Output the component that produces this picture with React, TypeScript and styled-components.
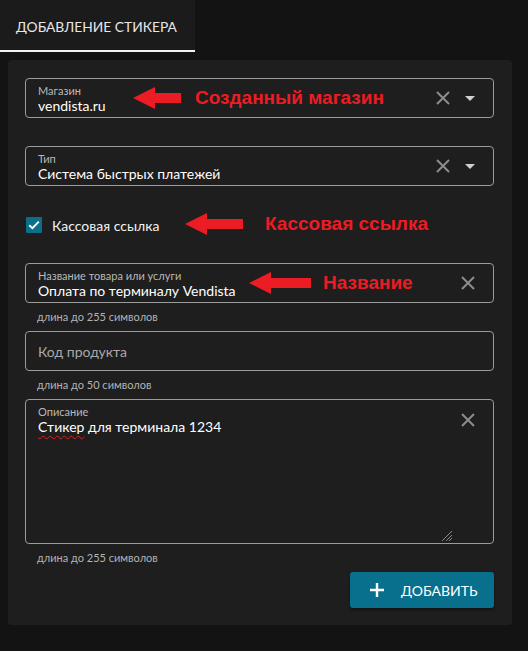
import styled, { createGlobalStyle } from 'styled-components';

const GlobalStyle = createGlobalStyle`
  html, body {
    margin: 0;
    padding: 0;
    background: #131313;
    font-family: Lato, 'Noto Sans', sans-serif;
  }
`;

export default function App() {
  return (
    <Page>
      <GlobalStyle />
      <TabBar>
        <Tab>Добавление стикера</Tab>
      </TabBar>
      <Panel>
        <Field $mb={28}>
          <FieldBody>
            <Label>Магазин</Label>
            <Value>vendista.ru</Value>
          </FieldBody>
          <Icons>
            <ClearIcon />
            <Caret />
          </Icons>
          <Note $left={107} $top={8} $textLeft={168}>
            <Arrow $w={48} />
            Созданный магазин
          </Note>
        </Field>

        <Field $mb={27}>
          <FieldBody>
            <Label>Тип</Label>
            <Value>Система быстрых платежей</Value>
          </FieldBody>
          <Icons>
            <ClearIcon />
            <Caret />
          </Icons>
        </Field>

        <CheckRow>
          <CheckBox>
            <svg width="12" height="10" viewBox="0 0 12 10">
              <path d="M1.2 5.2 L4.4 8.2 L10.8 1.6" fill="none" stroke="#fff" strokeWidth="2" />
            </svg>
          </CheckBox>
          <CheckLabel>Кассовая ссылка</CheckLabel>
          <Note $left={160} $top={0} $textLeft={240}>
            <Arrow $w={58} />
            Кассовая ссылка
          </Note>
        </CheckRow>

        <Field>
          <FieldBody>
            <Label>Название товара или услуги</Label>
            <Value>Оплата по терминалу Vendista</Value>
          </FieldBody>
          <Icons>
            <ClearIcon />
          </Icons>
          <Note $left={223} $top={8} $textLeft={297}>
            <Arrow $w={62} />
            Название
          </Note>
        </Field>
        <Helper>длина до 255 символов</Helper>

        <Field>
          <Placeholder>Код продукта</Placeholder>
        </Field>
        <Helper>длина до 50 символов</Helper>

        <Field $h={145}>
          <FieldBody>
            <Label>Описание</Label>
            <Value>
              <Misspelled>Стикер</Misspelled> для терминала 1234
            </Value>
          </FieldBody>
          <Icons $top>
            <ClearIcon />
          </Icons>
          <Resize viewBox="0 0 14 14" width="14" height="14">
            <path d="M13 3 L3 13 M13 7 L7 13 M13 10 L10 13" stroke="#8a8a8a" strokeWidth="1" />
          </Resize>
        </Field>
        <Helper>длина до 255 символов</Helper>

        <Actions>
          <AddButton>
            <svg width="16" height="16" viewBox="0 0 16 16">
              <path d="M8 1 V15 M1 8 H15" stroke="#fff" strokeWidth="2.4" />
            </svg>
            Добавить
          </AddButton>
        </Actions>
      </Panel>
    </Page>
  );
}

function ClearIcon() {
  return (
    <svg width="14" height="14" viewBox="0 0 14 14">
      <path d="M1 1 L13 13 M13 1 L1 13" stroke="#8c8c8c" strokeWidth="2" />
    </svg>
  );
}

const Page = styled.div`
  width: 528px;
  min-height: 651px;
  background: #131313;
`;

const TabBar = styled.div`
  display: flex;
`;

const Tab = styled.div`
  width: 195px;
  height: 52px;
  box-sizing: border-box;
  padding: 2px 0 0 16px;
  display: flex;
  align-items: center;
  background: #1b1b1b;
  border-bottom: 2px solid #f2f2f2;
  color: #e6e6e6;
  font-size: 13.8px;
  text-transform: uppercase;
`;

const Panel = styled.div`
  margin: 8px 0 0 8px;
  width: 504px;
  box-sizing: border-box;
  padding: 18px 18px 17px 17px;
  background: #1e1e1e;
  border-radius: 4px;
  display: flex;
  flex-direction: column;
`;

const Field = styled.div<{ $h?: number; $mb?: number }>`
  position: relative;
  height: ${(p) => p.$h ?? 40}px;
  box-sizing: border-box;
  border: 1px solid #9b9b9b;
  border-radius: 4px;
  margin-bottom: ${(p) => p.$mb ?? 0}px;
  display: flex;
  align-items: ${(p) => (p.$h ? 'flex-start' : 'center')};
`;

const FieldBody = styled.div`
  flex: 1;
  padding: 5px 12px 0;
  align-self: flex-start;
`;

const Label = styled.div`
  font-size: 11px;
  line-height: 13px;
  color: #b9b9b9;
`;

const Value = styled.div`
  font-size: 14px;
  line-height: 18px;
  color: #ffffff;
`;

const Misspelled = styled.span`
  text-decoration: underline wavy #e02020;
  text-decoration-thickness: 1px;
  text-underline-offset: 3px;
`;

const Placeholder = styled.div`
  padding-left: 12px;
  font-size: 14px;
  color: #a9a9a9;
`;

const Icons = styled.div<{ $top?: boolean }>`
  display: flex;
  align-items: center;
  gap: 13px;
  padding-right: 18px;
  ${(p) => (p.$top ? 'padding-top: 13px;' : '')}
`;

const Caret = styled.span`
  width: 0;
  height: 0;
  border-left: 5px solid transparent;
  border-right: 5px solid transparent;
  border-top: 5px solid #d0d0d0;
  margin-left: 2px;
`;

const Resize = styled.svg`
  position: absolute;
  right: 40px;
  bottom: 1px;
`;

const CheckRow = styled.div`
  position: relative;
  height: 24px;
  display: flex;
  align-items: center;
  gap: 10px;
  margin-bottom: 26px;
  padding-left: 1px;
`;

const CheckBox = styled.div`
  width: 16px;
  height: 16px;
  background: #0b6e8a;
  border-radius: 1px;
  display: flex;
  align-items: center;
  justify-content: center;
`;

const CheckLabel = styled.span`
  font-size: 14px;
  color: #f2f2f2;
`;

const Helper = styled.div`
  padding: 7px 0 0 12px;
  height: 14px;
  margin-bottom: 7px;
  font-size: 11px;
  line-height: 14px;
  color: #b3b3b3;
`;

const Note = styled.div<{ $left: number; $top: number; $textLeft: number }>`
  position: absolute;
  left: ${(p) => p.$left}px;
  top: ${(p) => p.$top}px;
  height: 22px;
  display: flex;
  align-items: center;
  gap: ${(p) => p.$textLeft - p.$left - 62}px;
  color: #ec1c24;
  font-family: 'Liberation Sans', Arial, sans-serif;
  font-weight: bold;
  font-size: 19px;
  white-space: nowrap;
  pointer-events: none;
`;

const Arrow = styled.span<{ $w: number }>`
  position: relative;
  width: ${(p) => p.$w}px;
  margin-right: ${(p) => 62 - p.$w}px;
  height: 22px;
  &::before {
    content: '';
    position: absolute;
    left: 0;
    top: 0;
    border-top: 11px solid transparent;
    border-bottom: 11px solid transparent;
    border-right: 22px solid #ec1c24;
  }
  &::after {
    content: '';
    position: absolute;
    left: 20px;
    right: 0;
    top: 6px;
    height: 10px;
    background: #ec1c24;
  }
`;

const Actions = styled.div`
  display: flex;
  justify-content: flex-end;
`;

const AddButton = styled.button`
  width: 144px;
  height: 36px;
  display: flex;
  align-items: center;
  gap: 16px;
  padding: 0 0 0 19px;
  border: none;
  border-radius: 3px;
  background: #08708d;
  color: #ffffff;
  font-family: Lato, 'Noto Sans', sans-serif;
  font-size: 14px;
  text-transform: uppercase;
  box-shadow: 0 2px 3px rgba(0, 0, 0, 0.4);
`;
